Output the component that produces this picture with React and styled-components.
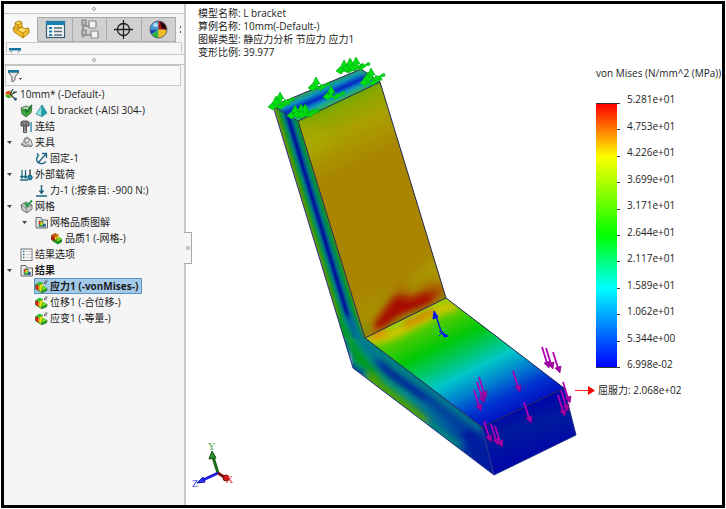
import React, { useState } from 'react';
import styled, { createGlobalStyle } from 'styled-components';

const treeItems = [
    { id: 'study', level: 0, icons: ['study'], label: '10mm* (-Default-)' },
    { id: 'part', level: 1, icons: ['solid', 'material'], label: 'L bracket (-AISI 304-)' },
    { id: 'connections', level: 1, icons: ['bolt'], label: '连结' },
    { id: 'fixtures', level: 1, icons: ['clamp'], label: '夹具', open: true },
    { id: 'fixed', level: 2, icons: ['fixed'], label: '固定-1' },
    { id: 'loads', level: 1, icons: ['loads'], label: '外部载荷', open: true },
    { id: 'force', level: 2, icons: ['force'], label: '力-1 (:按条目: -900 N:)' },
    { id: 'mesh', level: 1, icons: ['mesh'], label: '网格', open: true },
    { id: 'quality', level: 2, icons: ['folder'], label: '网格品质图解', open: true },
    { id: 'quality1', level: 3, icons: ['cube'], label: '品质1 (-网格-)' },
    { id: 'options', level: 1, icons: ['options'], label: '结果选项' },
    { id: 'results', level: 1, icons: ['folder'], label: '结果', open: true, bold: true },
    { id: 'stress', level: 2, icons: ['plot'], label: '应力1 (-vonMises-)' },
    { id: 'disp', level: 2, icons: ['plot'], label: '位移1 (-合位移-)' },
    { id: 'strain', level: 2, icons: ['plot'], label: '应变1 (-等量-)' },
];

const legendValues = [
    '5.281e+01', '4.753e+01', '4.226e+01', '3.699e+01', '3.171e+01', '2.644e+01',
    '2.117e+01', '1.589e+01', '1.062e+01', '5.344e+00', '6.998e-02',
];

const plotInfo = [
    '模型名称: L bracket',
    '算例名称: 10mm(-Default-)',
    '图解类型: 静应力分析 节应力 应力1',
    '变形比例: 39.977',
];

const tabs = [
    { id: 'feature', title: 'FeatureManager' },
    { id: 'property', title: 'PropertyManager' },
    { id: 'config', title: 'ConfigurationManager' },
    { id: 'dimxpert', title: 'DimXpertManager' },
    { id: 'display', title: 'DisplayManager' },
];

// where each force arrow starts
const forces = [
    [542, 347], [546, 348], [553, 352], [563, 382], [558, 395], [561, 390], [513, 371],
    [524, 402], [479, 377], [477, 382], [474, 390], [484, 421], [491, 424], [495, 426],
];

const fixtures = [
    [276, 105], [280, 101], [295, 114], [301, 113], [305, 113], [316, 86],
    [331, 95], [344, 69], [350, 67], [356, 66], [368, 81], [371, 77],
];

// icons below this line

const tabIcons = {
    feature: (
        <g stroke="#a87700" strokeWidth="0.8" strokeLinejoin="round">
            <path d="M3 9l2-2V4l4-2 3 1.500V8l3 2 2-1 2 1v4l-6 5-9-6z" fill="#f3bd2e" />
            <path d="M5 4l4-2 3 1.500L8 6zM3 9l2-1 3 2 4-2 3 2 2-1 2 1-6 4z" fill="#ffdf6a" />
            <path d="M8 6v4M13 14v5M8 10l4-2" fill="none" />
        </g>
    ),
    property: (
        <g>
            <rect x="1.5" y="2.5" width="18" height="16" fill="#eef3f6" stroke="#3b5c6e" strokeWidth="1.2" />
            <path d="M1 2h19v4H1z" fill="#1f7fae" />
            <path d="M4 9h3M4 12.5h3M4 16h3" stroke="#1f7fae" strokeWidth="2" />
            <path d="M9 9h8M9 12.5h8M9 16h8" stroke="#587078" strokeWidth="1.3" />
        </g>
    ),
    config: (
        <g fill="#f2f2f2" stroke="#858585" strokeWidth="1.2">
            <path d="M4 2v17M4 7h7M4 16h8" fill="none" strokeWidth="1.5" />
            <path d="M3 1h4v5H3zM3 11h4v5H3z" fill="#bbb" />
            <rect x="10" y="2" width="7" height="7" rx="1" />
            <rect x="12" y="12" width="7" height="7" rx="1" />
        </g>
    ),
    dimxpert: (
        <g fill="none" stroke="#202020" strokeWidth="1.3">
            <circle cx="10.5" cy="10.5" r="6" />
            <path d="M10.5 1v19M1 10.5h19" />
        </g>
    ),
    display: (
        <g>
            <path d="M10.5 10.5V2A8.5 8.5 0 0 0 2 10.5z" fill="#3c9fd8" />
            <path d="M10.5 10.5H2a8.500 8.500 0 0 0 1.500 5z" fill="#1a49b8" />
            <path d="M10.5 10.5L3.5 15.5a8.500 8.500 0 0 0 7 3.500z" fill="#2fb344" />
            <path d="M10.5 10.5V19a8.500 8.500 0 0 0 8.500-8.500z" fill="#f0bc24" />
            <path d="M10.5 10.5H19A8.5 8.5 0 0 0 10.5 2z" fill="#a80f13" />
            <path d="M12 3q6 1 6 8l-4-2z" fill="#1a0508" />
            <circle cx="10.5" cy="10.5" r="8.5" fill="none" stroke="#44505c" strokeWidth="0.8" />
            <ellipse cx="7.5" cy="6" rx="2.5" ry="2" fill="#d5effa" opacity="0.8" />
        </g>
    ),
};

const folderIcon = (
    <g>
        <path d="M1 2.5V12h11.5V4H7L6 1.5H1z" fill="#e8e8e8" stroke="#666" />
        <path d="M4 5v5.5h6.5V8H8V5z" fill="#22b14c" stroke="#444" strokeWidth="0.5" />
        <path d="M4 5h1.500v3H4z" fill="#e62d1c" />
        <path d="M5.5 6h2v3h-2z" fill="#f8d21c" />
        <path d="M8 8.500h2.500v2H8z" fill="#1d58c9" />
    </g>
);

const blockIcon = (
    <g>
        <path d="M0.5 4.500L4 2l4 1v3l4 2v2.500L7 13 .5 9z" fill="#12982a" />
        <path d="M0.5 4.500L4 2l4 1-4 2.500z" fill="#30c435" />
        <path d="M0.5 4.500L3 5.500v4.500L.5 8.500z" fill="#e31b12" />
        <path d="M3 5.500h1.500v5.500L3 10z" fill="#f58418" />
        <path d="M4.500 5.500L8 3.500V6L6.500 7.500v4.500l-2-1z" fill="#f8df16" />
        <path d="M6.500 8L8 6.500l4 1.500-4 2.500z" fill="#7ce01c" />
        <path d="M.5 4.500V9L7 13l5-2.500V8" fill="none" stroke="#3c5a1c" strokeWidth="0.5" />
    </g>
);

const treeIcons = {
    study: (
        <g>
            <circle cx="4" cy="6.5" r="3.500" fill="#f5c422" />
            <path d="M0.5 6A3.5 3.5 0 0 1 5 3v3.500z" fill="#e84b22" />
            <path d="M0.5 7A3.5 3.5 0 0 0 6 9.500L4 6.500z" fill="#44b04a" />
            <path d="M5 6l3-5M5 7l6-3M6 7l5 5M8 4h4" fill="none" stroke="#29404d" strokeWidth="1.2" />
            <circle cx="10.5" cy="11" r="1.500" fill="#22637f" />
        </g>
    ),
    solid: (
        <g>
            <path d="M1 4l5-2 6 2-1 5-5 4-4-3z" fill="#3fa53c" stroke="#466b46" strokeWidth="0.8" />
            <path d="M1 4l5 2.500L12 4 6 2z" fill="#b9d4b4" stroke="#466b46" strokeWidth="0.600" />
            <path d="M5 5l2 3 5-7" fill="none" stroke="#157725" strokeWidth="1.8" />
        </g>
    ),
    material: (
        <g stroke="#23848d" strokeWidth="0.7" strokeLinejoin="round">
            <path d="M7 1L1 10l6 2.500z" fill="#8ae4e6" />
            <path d="M7 1v11.500l5-3.500z" fill="#1aa2b0" />
        </g>
    ),
    bolt: (
        <g>
            <path d="M1 2l2-1h4l2 1v4H1z" fill="#8c8c8c" stroke="#444" strokeWidth="0.9" />
            <path d="M3.5 6h3v6.500h-3z" fill="#b5b5b5" stroke="#444" strokeWidth="0.9" />
            <path d="M4 8h2.500M4 10h2.500M3 2v3M6 2v3" stroke="#444" strokeWidth="0.7" />
            <path d="M11 2v10" stroke="#3d8fb5" strokeWidth="1.5" />
        </g>
    ),
    clamp: (
        <g fill="#dcdcdc" stroke="#777" strokeWidth="0.9">
            <path d="M1 8l3-2V3l3-2 4 3 1.500 5-1.500 2-3-1-1 1-4-1z" />
            <circle cx="7" cy="4.5" r="2" fill="#f0f0f0" />
            <path d="M4 6l4 3 4 1M1 8l6 2" fill="none" />
        </g>
    ),
    fixed: (
        <path
            d="M3 4Q1 6 2 9t6 2.500l3-2M3 11l8-9M7 1.500h4.500V6M2 1.500L4 4"
            fill="none"
            stroke="#1d6784"
            strokeWidth="1.3"
        />
    ),
    loads: (
        <g stroke="#1d6784" strokeWidth="1.3" fill="none">
            <path d="M2 2v8M5.5 2v8M0 12h8M.5 8L2 10l1.500-2M4 8l1.500 2L7 8" />
            <path d="M10 1.500v6" stroke="#666" strokeWidth="1.8" />
            <circle cx="10" cy="9.5" r="2" fill="#2a93bd" />
        </g>
    ),
    force: (
        <g>
            <path d="M6.5 1v8M1 12h11" stroke="#1d6784" strokeWidth="1.5" />
            <path d="M3.5 6.500h6l-3 4z" fill="#1d6784" />
        </g>
    ),
    mesh: (
        <g>
            <path d="M1 5l5-3 6 3v4l-5 4-5-3z" fill="#c9cccd" stroke="#666" strokeWidth="0.9" />
            <path d="M1 5l5 3 6-3M6 8l1 5" fill="none" stroke="#666" strokeWidth="0.7" />
            <path d="M5 3l2 3 5-5.500" fill="none" stroke="#14952b" strokeWidth="1.8" />
        </g>
    ),
    folder: folderIcon,
    cube: (
        <g>
            <path d="M1 3.500L5 1l4 2v2l3 2v3l-4 2.500-5-3-2-2z" fill="#13982a" />
            <path d="M1 3.500L5 1l4 2-4 2z" fill="#f0631c" />
            <path d="M1 3.500L5 5v4L1 7.500z" fill="#dd1f16" />
            <path d="M5 5l4-2v3L5 8z" fill="#f6da1c" />
            <path d="M5 8l4-2 3 1-4 3z" fill="#86dd20" />
            <path d="M3 2.500l4 2V8M3 4.500v4M1 5.500l7 4 4-1" fill="none" stroke="#333c0e" strokeWidth="0.5" />
        </g>
    ),
    options: (
        <g>
            <rect x="1" y="1" width="11" height="11.5" fill="#f7f7f7" stroke="#777" />
            <path d="M3 3.500h1.500M3 6.500h1.500M3 9.500h1.500" stroke="#247aa1" strokeWidth="1.5" />
            <path d="M6 3.500h5M6 6.500h5M6 9.500h5" stroke="#cfcfcf" />
        </g>
    ),
    plot: (
        <g>
            {blockIcon}
            <path d="M10 1h2.500M10 1.500q-1.500 2 0 2.500t1.500-2.500" fill="none" stroke="#333" strokeWidth="0.7" />
        </g>
    ),
};

const Funnel = () => (
    <svg width="16" height="14" viewBox="0 0 16 14" aria-hidden="true">
        <path d="M1 3l4 5v5l3-2V8l4-5z" fill="#e4e4e4" stroke="#666" />
        <path d="M1 1h11v2.500H1z" fill="#16759b" />
        <path d="M12 9h3l-1.500 2z" fill="#333" />
    </svg>
);

// model drawing below this line

const Bracket = () => (
    <Scene viewBox="186 4 536 501" role="img" aria-label="von Mises stress on L bracket">
        <defs>
            <linearGradient id="wall" gradientUnits="userSpaceOnUse" x1="330" y1="97" x2="362" y2="164">
                <stop offset="0" stopColor="#55a800" />
                <stop offset="0.2" stopColor="#8ba800" />
                <stop offset="0.5" stopColor="#aba000" />
                <stop offset="1" stopColor="#a98500" />
            </linearGradient>
            <linearGradient id="cap" gradientUnits="userSpaceOnUse" x1="317" y1="87" x2="326" y2="107">
                <stop offset="0" stopColor="#35a34a" />
                <stop offset="0.25" stopColor="#0a94bd" />
                <stop offset="0.5" stopColor="#0526c4" />
                <stop offset="0.75" stopColor="#0898c8" />
                <stop offset="1" stopColor="#35b56d" />
            </linearGradient>
            <linearGradient id="side" gradientUnits="userSpaceOnUse" x1="302" y1="200" x2="322" y2="194">
                <stop offset="0" stopColor="#7a9200" />
                <stop offset="0.16" stopColor="#1f9a1c" />
                <stop offset="0.32" stopColor="#007f80" />
                <stop offset="0.5" stopColor="#0008a0" />
                <stop offset="0.68" stopColor="#007680" />
                <stop offset="0.84" stopColor="#009434" />
                <stop offset="1" stopColor="#7a9200" />
            </linearGradient>
            <linearGradient id="leg" gradientUnits="userSpaceOnUse" x1="365" y1="338" x2="422" y2="457">
                <stop offset="0" stopColor="#9fcf00" />
                <stop offset="0.1" stopColor="#5fcc00" />
                <stop offset="0.3" stopColor="#00c808" />
                <stop offset="0.44" stopColor="#00c868" />
                <stop offset="0.57" stopColor="#00c8c8" />
                <stop offset="0.72" stopColor="#0080cf" />
                <stop offset="0.86" stopColor="#0034d0" />
                <stop offset="1" stopColor="#0010c4" />
            </linearGradient>
            <linearGradient id="legSide" gradientUnits="userSpaceOnUse" x1="360" y1="350" x2="488" y2="450">
                <stop offset="0" stopColor="#009a52" />
                <stop offset="0.4" stopColor="#008a86" />
                <stop offset="0.7" stopColor="#005aa0" />
                <stop offset="1" stopColor="#001c9c" />
            </linearGradient>
            <linearGradient id="end" gradientUnits="userSpaceOnUse" x1="523" y1="407" x2="536" y2="455">
                <stop offset="0" stopColor="#0008a8" />
                <stop offset="0.4" stopColor="#001a9c" />
                <stop offset="1" stopColor="#0008a8" />
            </linearGradient>
            <clipPath id="wallClip"><path d="M298 121L380 82 446 298 365 338z" /></clipPath>
            <clipPath id="capClip"><path d="M273 106L361 69 380 82 298 121z" /></clipPath>
            <clipPath id="legClip"><path d="M365 338L446 298 564 388 482 427z" /></clipPath>
            <clipPath id="sideClip"><path d="M273 106L298 121 365 338 482 427 494 475 353 368z" /></clipPath>
            <filter id="soft" x="-50%" y="-50%" width="200%" height="200%"><feGaussianBlur stdDeviation="3" /></filter>
            <filter id="softer" x="-50%" y="-50%" width="200%" height="200%"><feGaussianBlur stdDeviation="6" /></filter>
        </defs>

        <g clipPath="url(#sideClip)">
            <path d="M350 320L365 338 482 427 494 475 353 368z" fill="url(#legSide)" />
            <path d="M273 106L298 121 365 338 343 338z" fill="url(#side)" />
            <g filter="url(#soft)" fill="none">
                <path d="M347 316l16 28 18 22" stroke="#0072a0" strokeWidth="7" />
                <path d="M338 318l16 32 24 30" stroke="#009a18" strokeWidth="10" />
                <path d="M340 340l10 30 14 6" stroke="#0030a0" strokeWidth="9" />
                <path d="M366 340l46 35 70 54" stroke="#007c88" strokeWidth="6" />
                <path d="M376 360l16 14 36 25 54 42" stroke="#003c9c" strokeWidth="9" />
                <path d="M380 366l45 32" stroke="#001c9c" strokeWidth="7" />
                <path d="M366 376l62 48" stroke="#4fa000" strokeWidth="10" />
                <path d="M426 422l34 26" stroke="#008c78" strokeWidth="8" />
                <path d="M466 430l26 36" stroke="#001ca0" strokeWidth="16" />
            </g>
        </g>

        <path d="M298 121L380 82 446 298 365 338z" fill="url(#wall)" />
        <g clipPath="url(#wallClip)">
            <g filter="url(#softer)">
                <path d="M408 285l36-40 6 40-20 20z" fill="#a89800" />
                <path d="M356 305l40-18-20 50-14 4z" fill="#a89000" />
                <path d="M365 338l16-22 18-28 16 8 12-14 20 2-2 12-66 36z" fill="#a84400" />
                <path d="M298 124l40 12-30 22z" fill="#a8a800" />
            </g>
            <g filter="url(#soft)">
                <path d="M372 328l13-18 11-14 14 4 12-6 16 2-18 14-18 4-20 15z" fill="#a80c00" />
                <path d="M376 334l24-13 30-15 16-12v12l-68 34z" fill="#a07000" />
                <path d="M393 326l30-15M362 336l6-12M440 302l8-8" stroke="#62980c" strokeWidth="4" />
            </g>
        </g>

        <path d="M273 106L361 69 380 82 298 121z" fill="url(#cap)" />
        <g clipPath="url(#capClip)">
            <path d="M273 106l6 4M360 68l20 14M298 121l82-39" stroke="#35b040" strokeWidth="4" fill="none" filter="url(#soft)" />
        </g>

        <path d="M365 338L446 298 564 388 482 427z" fill="url(#leg)" />
        <g clipPath="url(#legClip)" filter="url(#soft)">
            <path d="M370 340l22-5 50-26 14-3" stroke="#d0c400" strokeWidth="9" fill="none" />
            <path d="M370 337l16-6M404 325l16-7 14-8" stroke="#e07800" strokeWidth="6" fill="none" />
        </g>

        <path d="M482 427L564 388 576 435 494 475z" fill="url(#end)" />

        <g fill="none" stroke="#222655" strokeWidth="1">
            <path d="M273 106L361 69 380 82 298 121zM298 121L365 338 446 298 380 82M365 338L482 427 564 388 446 298" />
            <path d="M273 106L353 368 494 475 576 435 564 388M482 427l12 48" stroke="#26328c" />
        </g>

        {fixtures.map(([x, y]) => (
            <g key={`${x}-${y}`} transform={`translate(${x} ${y})`} fill="#00e010" stroke="#00b010" strokeWidth="0.7">
                <path d="M0-9L4-2H1.500V1h3v-2.500L10 0 5 4 0 2l-3 3-5-3 4-4 2.500 1.500V-2h-2z" />
                <path d="M8 0l4-2" stroke="#00d810" strokeWidth="2" />
                <circle cx="12.5" cy="-2" r="1.5" />
            </g>
        ))}

        {forces.map(([x, y]) => (
            <g key={`${x}-${y}`} transform={`translate(${x} ${y})`} fill="#a800a8">
                <path d="M0 0l5 16" stroke="#b400b4" strokeWidth="1.8" />
                <path d="M2 16l6-2-1 7z" stroke="#860086" strokeWidth="0.7" />
            </g>
        ))}

        <g stroke="#0b14f0" fill="#0b14f0">
            <path d="M442 334l-6-18" strokeWidth="1.4" />
            <path d="M434 311l-1 8 5-2z" />
            <path d="M442 334l3 2M439 331l5 5M439 336l5-5" />
            <path d="M443 333l5 3-4 1z" />
        </g>
    </Scene>
);

const Axes = () => (
    <AxesDrawing width="46" height="52" viewBox="0 0 46 52" aria-label="XYZ">
        <path d="M27 32L22 16" stroke="#176c17" strokeWidth="3" />
        <path d="M21 10l-3 8 7-1z" fill="#2a9030" stroke="#0b4c10" />
        <path d="M27 32L12 39" stroke="#1d1de0" strokeWidth="3" />
        <path d="M6 42l6-6 2 5z" fill="#3030ff" stroke="#1010a0" />
        <path d="M27 32l6 4" stroke="#7c1010" strokeWidth="3" />
        <circle cx="35" cy="37" r="3" fill="#d41818" stroke="#7c1010" />
        <AxisLetter x="17" y="9" fill="#37a037">Y</AxisLetter>
        <AxisLetter x="1" y="46" fill="#3838f0">Z</AxisLetter>
        <AxisLetter x="35" y="42" fill="#f03030">X</AxisLetter>
    </AxesDrawing>
);

// React Component below this line

const App = () => {
    const [activeTab, setActiveTab] = useState('feature');
    const [selected, setSelected] = useState('stress');

    return (
        <Frame>
            <GlobalStyle />
            <SidePanel>
                <Grip><Dot /></Grip>
                <TabBar role="tablist">
                    {tabs.map(tab => (
                        <Tab
                            key={tab.id}
                            role="tab"
                            aria-label={tab.title}
                            aria-selected={tab.id === activeTab}
                            $active={tab.id === activeTab}
                            onClick={() => setActiveTab(tab.id)}
                        >
                            <svg width="21" height="21" viewBox="0 0 21 21">{tabIcons[tab.id]}</svg>
                        </Tab>
                    ))}
                    <MoreTabs aria-label="More">
                        <svg width="3" height="9" viewBox="0 0 3 9"><path d="M1 1l1 1-1 1M1 6l1 1-1 1" stroke="#555" fill="none" /></svg>
                    </MoreTabs>
                </TabBar>
                <CutRow>
                    <svg width="12" height="6" viewBox="0 0 12 6" aria-hidden="true">
                        <path d="M0 1h12v2.500H0z" fill="#16759b" />
                        <path d="M1 3.500l2 2M11 3.500l-2 2" stroke="#666" />
                    </svg>
                </CutRow>
                <Grip $top><Dot /></Grip>
                <FilterBar>
                    <FilterButton aria-label="Filter"><Funnel /></FilterButton>
                </FilterBar>
                <Tree>
                    {treeItems.map(item => (
                        <TreeRow key={item.id} $level={item.level}>
                            {item.level > 0 && (
                                <Toggle as={item.open ? 'button' : 'span'} aria-label={item.open ? 'Collapse' : undefined}>
                                    {item.open && <svg width="5" height="3" viewBox="0 0 5 3"><path d="M0 0h5L2.500 3z" fill="#444" /></svg>}
                                </Toggle>
                            )}
                            <TreeItem
                                $selected={item.id === selected}
                                $bold={item.bold || item.id === selected}
                                onClick={() => setSelected(item.id)}
                            >
                                {item.icons.map(name => (
                                    <svg key={name} width="13" height="13" viewBox="0 0 13 13">{treeIcons[name]}</svg>
                                ))}
                                <span>{item.label}</span>
                            </TreeItem>
                        </TreeRow>
                    ))}
                </Tree>
            </SidePanel>
            <Splitter>
                <SplitterHandle aria-label="Hide panel"><Dot /></SplitterHandle>
            </Splitter>
            <Viewport>
                <Bracket />
                <PlotInfo>
                    {plotInfo.map(line => <p key={line}>{line}</p>)}
                </PlotInfo>
                <Legend>
                    <LegendTitle>von Mises (N/mm^2 (MPa))</LegendTitle>
                    <Scale>
                        <ColorBar />
                        <Ticks>
                            {legendValues.map(value => <Tick key={value} />)}
                        </Ticks>
                        <Values>
                            {legendValues.map(value => <li key={value}>{value}</li>)}
                        </Values>
                    </Scale>
                    <Yield>
                        <svg width="22" height="11" viewBox="0 0 22 11" aria-hidden="true">
                            <path d="M1 5.500h14" stroke="#ff2020" />
                            <path d="M14 1l7 4.500-7 4.500z" fill="#ff0000" />
                        </svg>
                        <span>屈服力: 2.068e+02</span>
                    </Yield>
                </Legend>
                <Axes />
            </Viewport>
        </Frame>
    );
};

export default App;

//styling below this line

const GlobalStyle = createGlobalStyle`
    * {
        box-sizing: border-box;
    }

    body {
        margin: 0;
        background: #ffffff;
        color: #1c1c1c;
        font-family: 'Open Sans', 'Noto Sans CJK SC', sans-serif;
        font-size: 10px;
    }

    button {
        margin: 0;
        padding: 0;
        border: 0;
        background: none;
        color: inherit;
        font: inherit;
    }

    ul, p {
        margin: 0;
        padding: 0;
        list-style: none;
    }

    svg {
        display: block;
        flex: none;
    }
`

const Frame = styled.div`
    display: flex;
    min-height: calc(100vh - 2px);
    margin: 1px;
    border: 3px solid #000000;
`

const SidePanel = styled.aside`
    width: 180px;
    flex: none;
    background: #f5f5f5;
`

    const Grip = styled.div`
        display: flex;
        justify-content: center;
        align-items: center;
        height: ${props => props.$top ? '11px' : '10px'};
        border-top: ${props => props.$top ? '1px solid #c4c4c4' : '0'};
        border-bottom: 1px solid #c4c4c4;
        background: #f8f8f8;
    `

    const Dot = styled.span`
        width: 4px;
        height: 4px;
        border: 1px solid #a0a0a0;
        border-radius: 50%;
    `

    const TabBar = styled.div`
        display: flex;
        height: 25px;
        margin-top: 3px;
    `

        const Tab = styled.button`
            display: flex;
            flex: 1;
            justify-content: center;
            align-items: center;
            border: 1px solid ${props => props.$active ? '#f8f8f8' : '#a8a8a8'};
            border-left: 0;
            border-right-color: #a8a8a8;
            background: ${props => props.$active ? '#f8f8f8' : '#d0d0d0'};
        `

        const MoreTabs = styled.button`
            display: flex;
            justify-content: center;
            align-items: center;
            width: 8px;
        `

    const CutRow = styled.div`
        height: 11px;
        margin: 0 2px 1px;
        padding: 4px 2px 0;
        border: 1px solid #cccccc;
        border-bottom: 0;
        overflow: hidden;
    `

    const FilterBar = styled.div`
        height: 21px;
        margin: 0 3px 0 1px;
        border: 1px solid #c8c8c8;
        background: #f8f8f8;
    `

        const FilterButton = styled.button`
            display: block;
            padding: 3px 1px;
        `

const Tree = styled.ul`
    overflow: hidden;
`

    const TreeRow = styled.li`
        display: flex;
        align-items: center;
        height: 16px;
        padding-left: ${props => props.$level > 0 ? (props.$level - 1) * 15 : 0}px;
    `

    const Toggle = styled.button`
        display: flex;
        align-items: center;
        width: 15px;
        height: 16px;
        padding-left: 3px;
    `

    const TreeItem = styled.button`
        display: flex;
        align-items: center;
        gap: 2px;
        height: 16px;
        padding-right: 3px;
        border: 1px solid ${props => props.$selected ? '#5c94c4' : 'transparent'};
        background: ${props => props.$selected ? '#a3c9e8' : 'transparent'};
        font-weight: ${props => props.$bold ? 700 : 400};
        line-height: 14px;
        white-space: nowrap;
    `

const Splitter = styled.div`
    position: relative;
    width: 2px;
    flex: none;
    background: #c8c8c8;
`

    const SplitterHandle = styled.button`
        position: absolute;
        top: 50%;
        left: 0;
        display: flex;
        justify-content: center;
        align-items: center;
        width: 8px;
        height: 32px;
        margin-top: -23px;
        border: 1px solid #a8a8a8;
        border-left: 0;
        background: #f5f5f5;
    `

// drawing and captions share one grid cell, so the captions stay in the corners
const Viewport = styled.main`
    display: grid;
    flex: 1;
    min-width: 0;
    background: #ffffff;

    > * {
        grid-area: 1 / 1;
    }
`

    const Scene = styled.svg`
        width: 100%;
        height: 100%;
    `

    const PlotInfo = styled.div`
        align-self: start;
        justify-self: start;
        padding: 3px 12px;
        line-height: 13px;
    `

    const Legend = styled.section`
        align-self: start;
        justify-self: end;
        width: 148px;
        padding-top: 62px;
    `

        const LegendTitle = styled.h2`
            margin: 0 0 23px 22px;
            font-size: 10px;
            font-weight: 400;
            line-height: 14px;
            white-space: nowrap;
        `

        const Scale = styled.div`
            display: flex;
            height: 265px;
            padding-left: 22px;
        `

            const ColorBar = styled.div`
                width: 21px;
                border-top: 1px solid #333333;
                border-bottom: 1px solid #333333;
                background: linear-gradient(#ff0000, #ffff00 20%, #00ff00 50%, #00ffff 70%, #0000ff);
            `

            const Ticks = styled.div`
                display: flex;
                flex-direction: column;
                justify-content: space-between;
            `

                const Tick = styled.span`
                    width: 3px;
                    height: 1px;
                    background: #333333;
                `

            const Values = styled.ul`
                display: flex;
                flex-direction: column;
                justify-content: space-between;
                margin: -11px 0 -3px 7px;
                line-height: 14px;
            `

        const Yield = styled.div`
            display: flex;
            align-items: center;
            gap: 2px;
            margin-top: 15px;
            line-height: 14px;
            white-space: nowrap;
        `

    const AxesDrawing = styled.svg`
        align-self: end;
        justify-self: start;
        margin: 0 0 12px 5px;
    `

        const AxisLetter = styled.text`
            font-family: 'Liberation Serif', serif;
            font-size: 10px;
        `
